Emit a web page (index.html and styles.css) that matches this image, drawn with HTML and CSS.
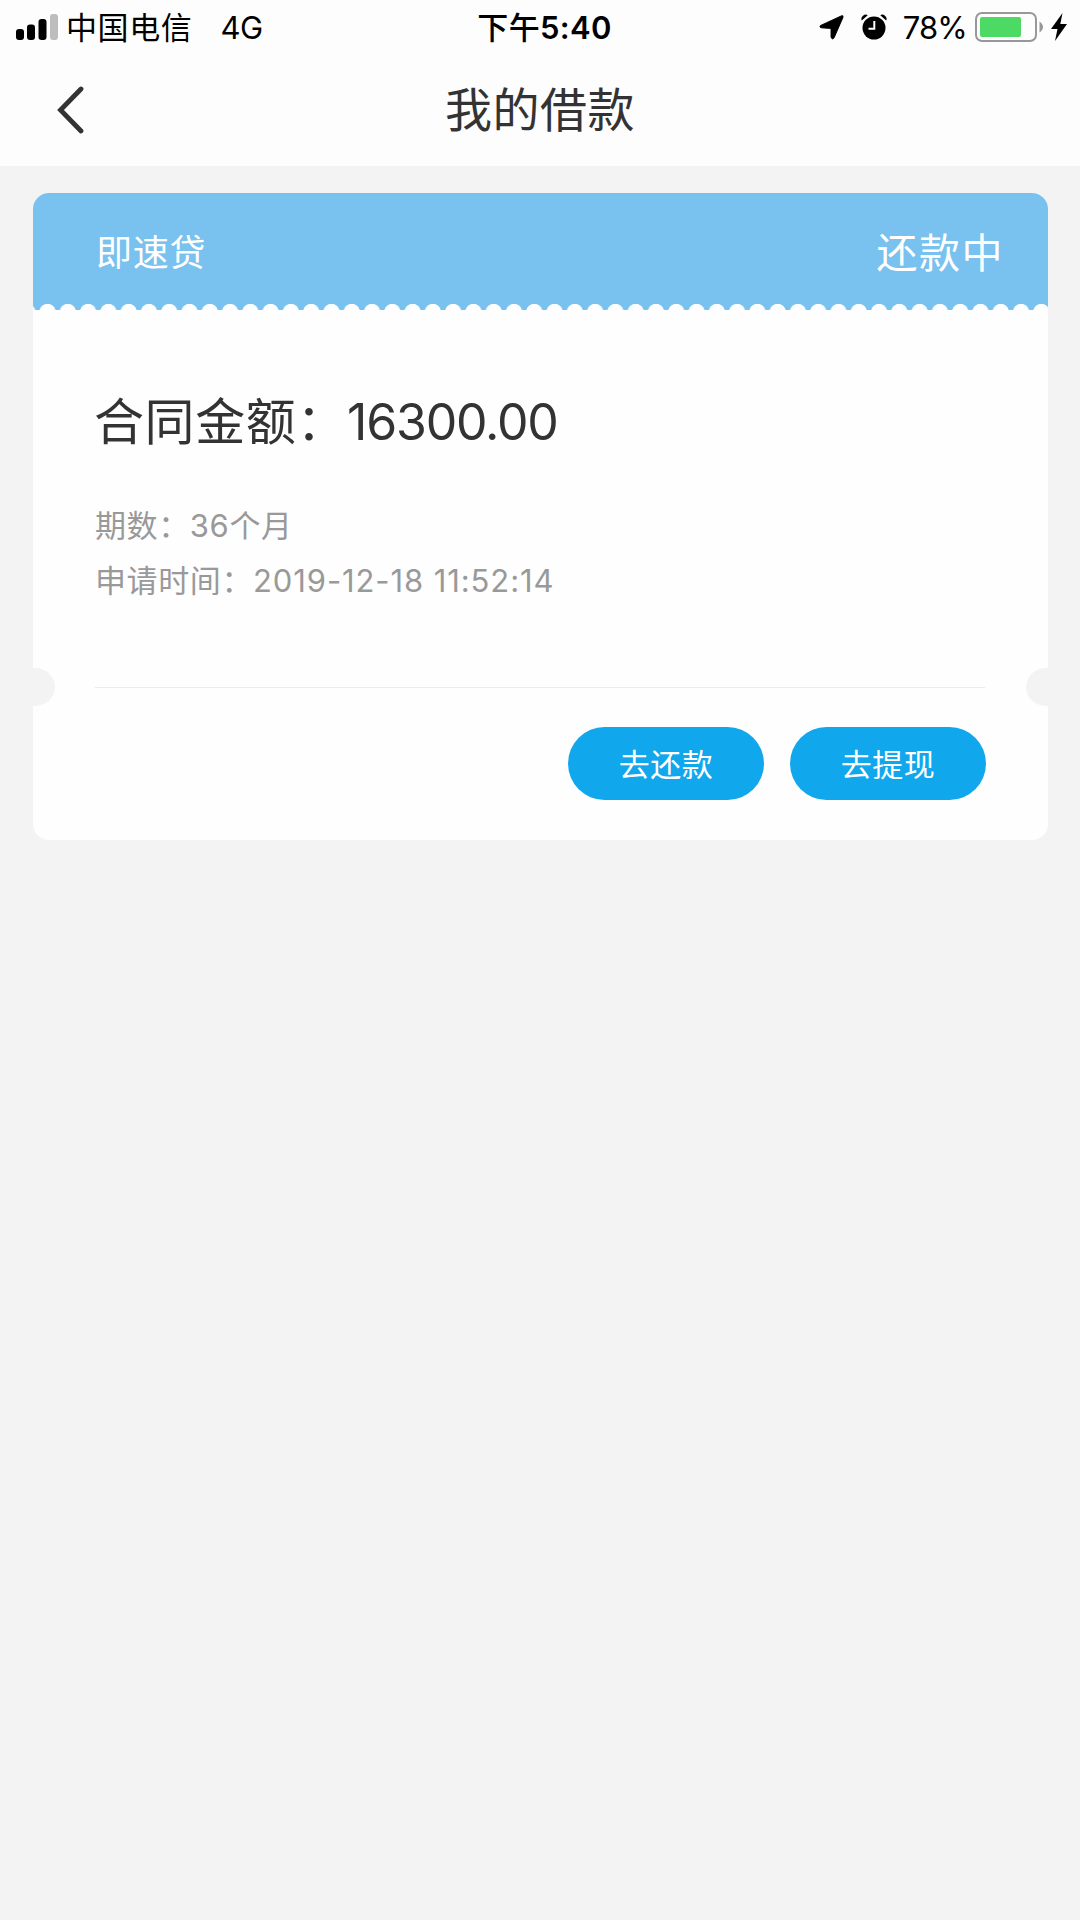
FILE: index.html
```
<!DOCTYPE html>
<html lang="zh-CN">
<head>
<meta charset="utf-8">
<title>我的借款</title>
<link rel="stylesheet" href="styles.css">
</head>
<body>
<header class="top">
  <div class="status">
    <div class="status-left">
      <svg class="signal" width="42" height="26" viewBox="0 0 42 26">
        <rect x="0" y="15" width="8" height="11" rx="3"/>
        <rect x="11" y="10.500" width="8" height="15.500" rx="3"/>
        <rect x="22.500" y="5" width="8" height="21" rx="3"/>
        <rect x="34" y="0" width="8" height="26" rx="3" fill="#bdbdbd"/>
      </svg>
      <span class="carrier">中国电信</span>
      <span class="network">4G</span>
    </div>
    <div class="time">下午<span class="clock">5:40</span></div>
    <div class="status-right">
      <svg class="location" width="25" height="25" viewBox="0 0 25 25"><path d="M1.500 10.500 22.500.8Q24.500 0 24 2.400L15 23Q13.500 25 12 22.500V13.500L2 12.800Q0 12 1.500 10.500Z" stroke="#000" stroke-width=".9" stroke-linejoin="round"/></svg>
      <svg class="alarm" width="26" height="26" viewBox="0 0 26 26">
        <circle cx="13" cy="14" r="11.500"/>
        <path d="M.8 6.500Q-.5 4 2 1.800 4.500-.3 6.700 1.200ZM25.200 6.500Q26.500 4 24 1.800 21.500-.3 19.300 1.200Z"/>
        <path d="M13.300 7V14.800H7.500" fill="none" stroke="#fff" stroke-width="2"/>
      </svg>
      <span class="percent">78%</span>
      <svg class="battery" width="69" height="30" viewBox="0 0 69 30">
        <rect x="1" y="1" width="60" height="28" rx="6" fill="none" stroke="#98989b" stroke-width="2"/>
        <path d="M64.500 9.500Q68 12 68 15T64.500 20.500Z" fill="#98989b"/>
        <rect x="5" y="5" width="41" height="20" rx="2" fill="#4cd964"/>
      </svg>
      <svg class="bolt" width="16" height="28" viewBox="0 0 16 28"><path d="M11.500 0 0 16H6.500L4 28 16 11H9.300Z"/></svg>
    </div>
  </div>
  <nav class="nav">
    <svg class="back" width="28" height="50" viewBox="0 0 28 50"><path d="M25 4 4.500 25 25 46" fill="none" stroke="#333" stroke-width="4.800" stroke-linecap="round"/></svg>
    <h1 class="title">我的借款</h1>
  </nav>
</header>
<main class="content">
  <article class="card">
    <div class="card-head">
      <span class="product">即速贷</span>
      <span class="state">还款中</span>
    </div>
    <div class="card-body">
      <p class="amount">合同金额：<span class="amount-value">16300.00</span></p>
      <p class="detail">期数：<span class="term">36</span>个月</p>
      <p class="detail">申请时间：<span class="date">2019-12-18 11:52:14</span></p>
    </div>
    <div class="tear"></div>
    <div class="actions">
      <button class="btn">去还款</button>
      <button class="btn">去提现</button>
    </div>
  </article>
</main>
</body>
</html>
```
FILE: styles.css
```
* { box-sizing: border-box; }
body {
  margin: 0;
  min-height: 1920px;
  background: #f3f3f3;
  color: #333;
  font-family: Inter, "Noto Sans CJK SC", sans-serif;
}
.top { height: 166px; background: #fdfdfd; }
.status {
  display: grid;
  grid-template-columns: 1fr auto 1fr;
  align-items: center;
  height: 54px;
  padding: 0 13px 0 16px;
  color: #000;
  font-size: 31px;
  line-height: 40px;
}
.status-left, .status-right { display: flex; align-items: center; }
.status-right { justify-content: flex-end; }
.signal { margin-right: 8px; }
.carrier { padding-top: 1px; letter-spacing: .6px; }
.network { margin-left: 28px; padding-top: 1px; letter-spacing: -.5px; }
.time { padding: 1px 0 0 6px; font-weight: 500; letter-spacing: .3px; }
.clock { font-weight: 600; }
.alarm { margin-left: 17px; }
.percent { margin-left: 16px; padding-top: 1px; letter-spacing: -.8px; }
.battery { margin-left: 8px; margin-top: -1px; }
.bolt { margin-left: 7px; }
.nav {
  display: grid;
  grid-template-columns: 1fr auto 1fr;
  align-items: center;
  height: 111px;
  padding: 0 56px;
}
.title { margin: 0; font-size: 47px; font-weight: 400; line-height: 60px; letter-spacing: .5px; }
.content { padding: 27px 32px 0 33px; }
.card { height: 647px; border-radius: 16px; background: #fefefe; overflow: hidden; }
.card-head {
  display: flex;
  justify-content: space-between;
  align-items: center;
  height: 117px;
  padding: 0 44px 3px 63px;
  background:
    radial-gradient(circle at 50% 8px, #fefefe 7.800px, transparent 8.500px) 4.400px 111px / 20.290px 20px repeat-x,
    #79c1ee;
  color: #fff;
}
.product { font-size: 36px; letter-spacing: .8px; }
.state { font-size: 41px; letter-spacing: 1.500px; }
.card-body { height: 377px; padding: 77px 62px 0 61px; }
.amount { margin: 0 0 41px; font-size: 50px; line-height: 70px; letter-spacing: .6px; }
.amount-value { letter-spacing: -1.200px; }
.detail { margin: 0 0 0 1px; color: #999; font-size: 31px; line-height: 55px; letter-spacing: .6px; }
.date { letter-spacing: .9px; }
.tear {
  height: 1px;
  position: relative;
  margin: 0 63px 0 62px;
  background: #ebebeb;
}
.tear::before, .tear::after {
  content: "";
  position: absolute;
  top: -19px;
  width: 40px;
  height: 38px;
  border-radius: 50%;
  background: #f3f3f3;
}
.tear::before { left: -80px; }
.tear::after { right: -81px; }
.actions { display: flex; justify-content: flex-end; gap: 26px; padding: 39px 62px 0; }
.btn {
  width: 196px;
  height: 73px;
  padding: 0 0 3px;
  border: 0;
  border-radius: 37px;
  background: #11a7ec;
  color: #fff;
  font: inherit;
  font-size: 31px;
  letter-spacing: .5px;
}
```
